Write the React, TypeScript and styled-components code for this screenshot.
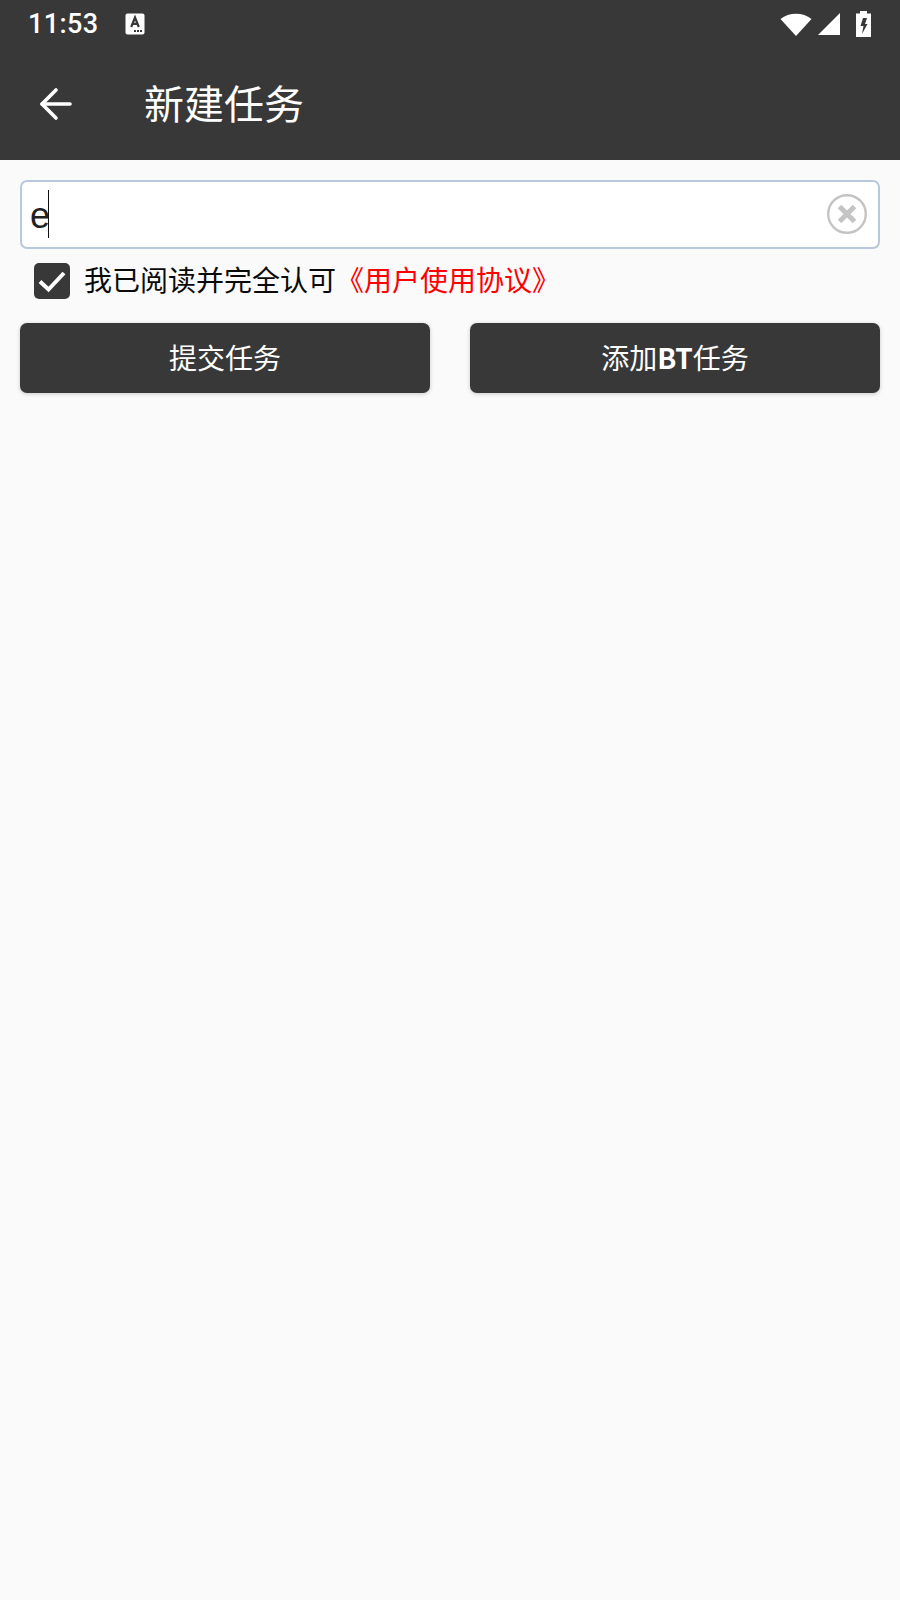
import React from "react";
import styled, { createGlobalStyle } from "styled-components";
import { ArrowLeft } from "lucide-react";

const GlobalStyle = createGlobalStyle`
  html, body {
    margin: 0;
    padding: 0;
    background: #fafafa;
    font-family: "Noto Sans CJK SC", "Noto Sans", sans-serif;
  }
  * { box-sizing: border-box; }
`;

const App = () => {
  return (
    <Page>
      <GlobalStyle />
      <Header>
        <StatusBar>
          <StatusLeft>
            <Clock>11:53</Clock>
            <svg width="20" height="22" viewBox="0 0 20 22">
              <rect x="0.5" y="0.5" width="19" height="21" rx="2" fill="#fff" />
              <path d="M6.2 14 L10 4.5 L13.8 14 M7.6 10.8 H12.4" stroke="#383838" strokeWidth="2.2" fill="none" />
              <path d="M9 17h2v2H9zM12 17h2v2h-2zM15 17h2v2h-2z" fill="#383838" />
            </svg>
          </StatusLeft>
          <StatusRight>
            <svg width="32" height="24" viewBox="0 0 32 24">
              <path d="M0.5 7 C9 0 23 0 31.5 7 L16 24 Z" fill="#fff" />
            </svg>
            <svg width="22" height="22" viewBox="0 0 22 22">
              <path d="M22 0 V22 H0 Z" fill="#fff" />
            </svg>
            <BatteryIcon width="15" height="26" viewBox="0 0 15 26">
              <path d="M4 0 H11 V2.5 H15 V26 H0 V2.5 H4 Z" fill="#fff" />
              <path d="M7 7 L11 7 L9 13 H11.5 L6 23 L7.5 15 H4.5 Z" fill="#383838" />
            </BatteryIcon>
          </StatusRight>
        </StatusBar>
        <Toolbar>
          <BackButton>
            <ArrowLeft size={48} strokeWidth={1.8} color="#fff" />
          </BackButton>
          <Title>新建任务</Title>
        </Toolbar>
      </Header>
      <Content>
        <InputBox>
          <InputText>e</InputText>
          <Caret />
          <ClearIcon width="40" height="40" viewBox="0 0 40 40">
            <circle cx="20" cy="20" r="18.8" fill="none" stroke="#c4c4c4" strokeWidth="2.4" />
            <path d="M12.5 12.5 L27.5 27.5 M27.5 12.5 L12.5 27.5" stroke="#c4c4c4" strokeWidth="5" />
          </ClearIcon>
        </InputBox>
        <AgreeRow>
          <CheckBox>
            <svg width="30" height="24" viewBox="0 0 30 24">
              <path d="M3 12.5 L11.5 20.5 L27 4" stroke="#fff" strokeWidth="4" fill="none" />
            </svg>
          </CheckBox>
          <AgreeText>
            我已阅读并完全认可<AgreeLink>《用户使用协议》</AgreeLink>
          </AgreeText>
        </AgreeRow>
        <ButtonRow>
          <ActionButton>提交任务</ActionButton>
          <ActionButton>
            添加<b>BT</b>任务
          </ActionButton>
        </ButtonRow>
      </Content>
    </Page>
  );
};

const Page = styled.div`
  width: 900px;
  height: 1600px;
  background: #fafafa;
  overflow: hidden;
`;

const Header = styled.div`
  height: 160px;
  background: #383838;
`;

const StatusBar = styled.div`
  height: 48px;
  padding: 0 29px 0 28px;
  display: flex;
  align-items: center;
  justify-content: space-between;
`;

const StatusLeft = styled.div`
  display: flex;
  align-items: center;
  gap: 26px;
`;

const Clock = styled.span`
  font-family: Roboto, sans-serif;
  font-weight: 500;
  font-size: 27px;
  letter-spacing: 0.4px;
  color: #fff;
`;

const StatusRight = styled.div`
  display: flex;
  align-items: center;
  gap: 6px;
`;

const BatteryIcon = styled.svg`
  margin-left: 10px;
`;

const Toolbar = styled.div`
  height: 112px;
  display: flex;
  align-items: center;
`;

const BackButton = styled.div`
  width: 112px;
  height: 56px;
  padding-left: 32px;
  display: flex;
  align-items: center;
`;

const Title = styled.div`
  margin-left: 32px;
  margin-bottom: 4px;
  font-size: 40px;
  line-height: 56px;
  color: #fff;
`;

const Content = styled.div`
  padding: 20px 20px 0;
`;

const InputBox = styled.div`
  height: 69px;
  padding: 0 11px 2px 8px;
  display: flex;
  align-items: center;
  background: #fff;
  border: 2px solid #b9c8dd;
  border-radius: 7px;
`;

const InputText = styled.span`
  margin-top: 4px;
  font-family: "Liberation Sans", Arial, sans-serif;
  font-size: 36px;
  color: #222;
`;

const Caret = styled.span`
  width: 1px;
  height: 48px;
  margin-left: -2px;
  background: #111;
`;

const ClearIcon = styled.svg`
  margin-left: auto;
`;

const AgreeRow = styled.div`
  height: 50px;
  margin-top: 7px;
  padding-left: 14px;
  display: flex;
  align-items: center;
`;

const CheckBox = styled.div`
  width: 36px;
  height: 36px;
  display: flex;
  align-items: center;
  justify-content: center;
  background: #383838;
  border-radius: 5px;
`;

const AgreeText = styled.div`
  margin-left: 14px;
  margin-bottom: 4px;
  font-size: 28px;
  color: #0a0a0a;
`;

const AgreeLink = styled.span`
  color: #ff0000;
`;

const ButtonRow = styled.div`
  margin-top: 17px;
  display: grid;
  grid-template-columns: 410px 410px;
  column-gap: 40px;
`;

const ActionButton = styled.div`
  height: 70px;
  padding-bottom: 3px;
  display: flex;
  align-items: center;
  justify-content: center;
  background: #383838;
  border-radius: 7px;
  box-shadow: 0 1px 4px rgba(0, 0, 0, 0.2);
  font-size: 28px;
  color: #fff;

  b {
    font-weight: 700;
  }
`;

export default App;
